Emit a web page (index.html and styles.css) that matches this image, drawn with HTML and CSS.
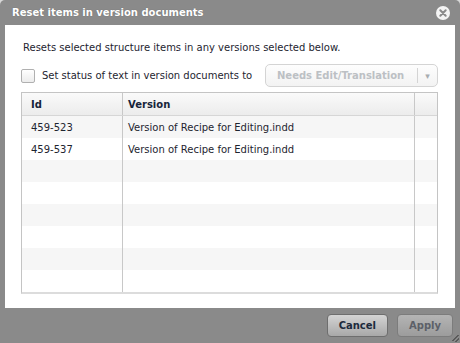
FILE: index.html
```html
<!DOCTYPE html>
<html lang="en">
<head>
    <meta charset="UTF-8">
    <title>Reset items in version documents</title>
    <link rel="stylesheet" href="styles.css">
</head>
<body>
    <div class="dialog">
        <div class="title-bar">
            <span class="title">Reset items in version documents</span>
            <span class="close-btn">
                <svg width="14" height="14" viewBox="0 0 14 14">
                    <circle cx="7" cy="7" r="7" fill="#f4f4f4"/>
                    <path d="M4.3 4.3 L9.7 9.7 M9.7 4.3 L4.3 9.7" stroke="#8a8a8a" stroke-width="2" stroke-linecap="round"/>
                </svg>
            </span>
        </div>

        <div class="content">
            <p class="intro">Resets selected structure items in any versions selected below.</p>

            <div class="status-row">
                <label class="check-label">
                    <span class="checkbox"></span>
                    Set status of text in version documents to
                </label>
                <div class="select">
                    <span class="select-text">Needs Edit/Translation</span>
                    <span class="select-arrow">&#9662;</span>
                </div>
            </div>

            <div class="grid">
                <div class="grid-row grid-head">
                    <div class="cell col-id">Id</div>
                    <div class="cell col-version">Version</div>
                    <div class="cell col-pad"></div>
                </div>
                <div class="grid-row">
                    <div class="cell col-id">459-523</div>
                    <div class="cell col-version">Version of Recipe for Editing.indd</div>
                    <div class="cell col-pad"></div>
                </div>
                <div class="grid-row">
                    <div class="cell col-id">459-537</div>
                    <div class="cell col-version">Version of Recipe for Editing.indd</div>
                    <div class="cell col-pad"></div>
                </div>
                <div class="grid-row"><div class="cell col-id"></div><div class="cell col-version"></div><div class="cell col-pad"></div></div>
                <div class="grid-row"><div class="cell col-id"></div><div class="cell col-version"></div><div class="cell col-pad"></div></div>
                <div class="grid-row"><div class="cell col-id"></div><div class="cell col-version"></div><div class="cell col-pad"></div></div>
                <div class="grid-row"><div class="cell col-id"></div><div class="cell col-version"></div><div class="cell col-pad"></div></div>
                <div class="grid-row"><div class="cell col-id"></div><div class="cell col-version"></div><div class="cell col-pad"></div></div>
                <div class="grid-row"><div class="cell col-id"></div><div class="cell col-version"></div><div class="cell col-pad"></div></div>
            </div>
        </div>

        <div class="footer">
            <button class="btn">Cancel</button>
            <button class="btn btn-disabled">Apply</button>
            <span class="grip"></span>
        </div>
    </div>
</body>
</html>
```

FILE: styles.css
```css
body {
    margin: 0;
    background: #d8d8d8;
    font-family: "DejaVu Sans", Verdana, sans-serif;
    font-size: 10px;
    color: #1e2530;
}

.dialog {
    width: 460px;
    height: 343px;
    background: #8a8a8a;
    border-radius: 5px 5px 0 0;
    display: flex;
    flex-direction: column;
    position: relative;
}

.title-bar {
    height: 25px;
    display: flex;
    align-items: center;
    justify-content: space-between;
    padding: 0 10px 0 12px;
    box-sizing: border-box;
}

.title {
    color: #fff;
    font-weight: bold;
    font-size: 10px;
    text-shadow: 0 0 1px rgba(0, 0, 0, 0.3);
}

.close-btn {
    display: flex;
}

.content {
    margin: 0 5px;
    height: 283px;
    background: #fff;
    padding: 16px 17px 0 16px;
    box-sizing: border-box;
}

.intro {
    margin: 0 0 10px 2px;
    line-height: 13px;
    white-space: nowrap;
}

.status-row {
    display: flex;
    align-items: center;
    justify-content: space-between;
    height: 23px;
    margin-bottom: 5px;
    white-space: nowrap;
}

.check-label {
    display: flex;
    align-items: center;
    gap: 7px;
}

.checkbox {
    width: 12px;
    height: 12px;
    border: 1px solid #b0b0b0;
    border-radius: 2px;
    background: linear-gradient(#fff, #ececec);
}

.select {
    width: 173px;
    height: 23px;
    box-sizing: border-box;
    border: 1px solid #d4d4d4;
    border-radius: 5px;
    display: flex;
    align-items: center;
    background: linear-gradient(#fdfdfd, #f3f3f3);
}

.select-text {
    flex: 1;
    padding-left: 11px;
    font-weight: bold;
    color: #bcc0c4;
}

.select-arrow {
    width: 19px;
    height: 15px;
    border-left: 1px solid #d4d4d4;
    color: #a8acb0;
    font-size: 9px;
    display: flex;
    align-items: center;
    justify-content: center;
}

.grid {
    border: 1px solid #c4c4c4;
    border-bottom: 2px solid #dcdcdc;
}

.grid-row {
    display: flex;
    height: 22px;
}

.grid-row:nth-child(even) {
    background: #f6f6f6;
}

.grid-head {
    height: 23px;
    border-bottom: 1px solid #d6d6d6;
    background: linear-gradient(#fafafa, #ececec);
    font-weight: bold;
    color: #16243a;
    box-sizing: border-box;
}

.cell {
    display: flex;
    align-items: center;
    padding-left: 9px;
    box-sizing: border-box;
}

.col-id {
    width: 101px;
    border-right: 1px solid #c8c8c8;
}

.col-version {
    flex: 1;
    border-right: 1px solid #c8c8c8;
    padding-left: 5px;
}

.col-pad {
    width: 22px;
}

.footer {
    flex: 1;
    display: flex;
    justify-content: flex-end;
    align-items: center;
    gap: 9px;
    padding-right: 7px;
}

.btn {
    height: 23px;
    padding: 0 11px;
    border: 1px solid #6e6e6e;
    border-radius: 4px;
    background: linear-gradient(#d4d4d4, #a8a8a8);
    font-family: "DejaVu Sans", Verdana, sans-serif;
    font-size: 10px;
    font-weight: bold;
    color: #1c2a3c;
}

.btn-disabled {
    color: #5c6068;
    background: linear-gradient(#b4b4b4, #9c9c9c);
    border-color: #7c7c7c;
}

.grip {
    position: absolute;
    right: 1px;
    bottom: 1px;
    width: 7px;
    height: 7px;
    background: linear-gradient(135deg, transparent 40%, #5a5a5a 40%, #5a5a5a 50%, transparent 50%, transparent 70%, #5a5a5a 70%, #5a5a5a 80%, transparent 80%);
}
```
